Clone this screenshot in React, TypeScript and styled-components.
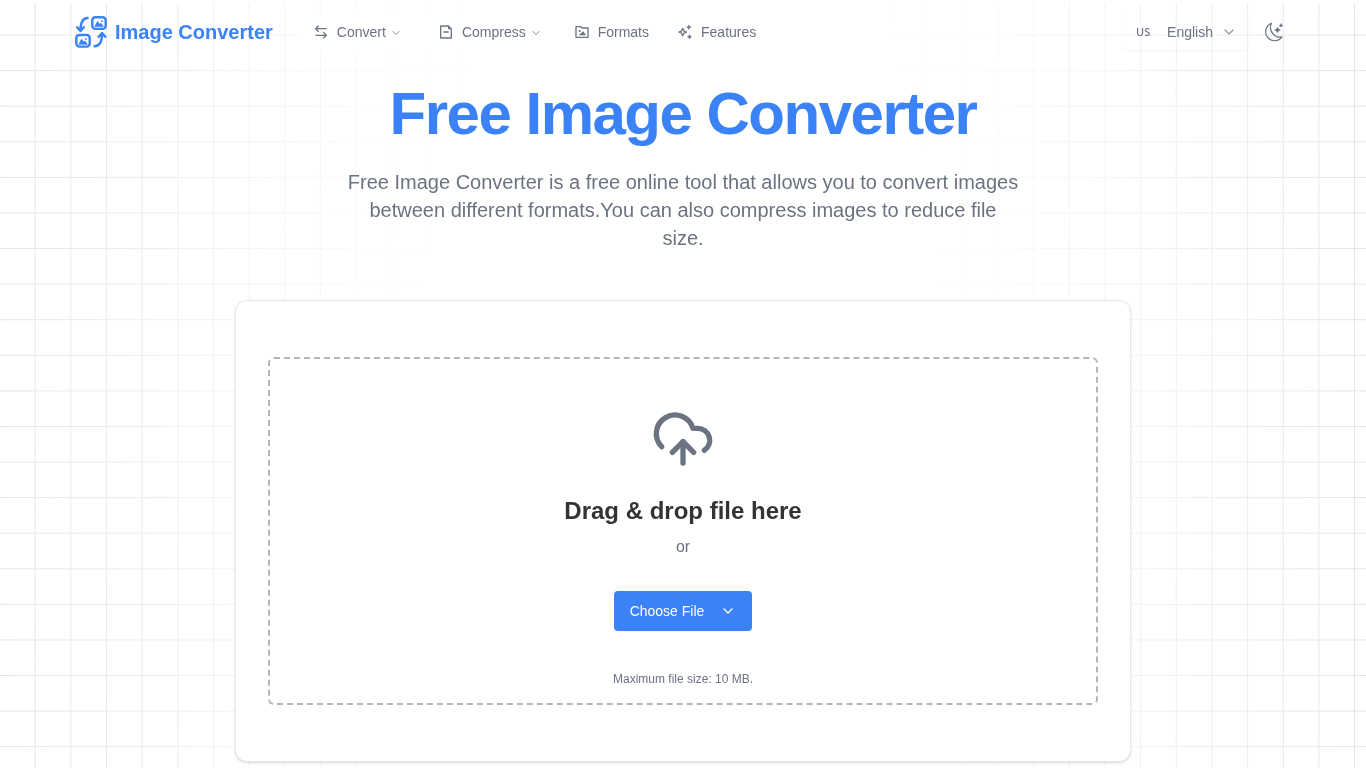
import React from 'react';
import styled, { createGlobalStyle } from 'styled-components';
import { LuCloudUpload } from 'react-icons/lu';
import { RiFileReduceLine, RiFolderImageLine } from 'react-icons/ri';
import { ChevronDown } from 'lucide-react';

const GlobalStyle = createGlobalStyle`
  *, *::before, *::after { box-sizing: border-box; }
  html { height: 100%; overflow: hidden; }
  body {
    margin: 0;
    min-height: 100%;
    background: #fff;
    color: #6b7280;
    font-family: "Liberation Sans", Arial, sans-serif;
    font-size: 14px;
    line-height: 20px;
  }
  a { color: inherit; text-decoration: none; }
  button { font: inherit; color: inherit; border: 0; background: none; cursor: pointer; }
  h1, h2, p, ul { margin: 0; padding: 0; }
`;

const Backdrop = styled.svg`
  position: fixed;
  inset: 0;
  z-index: -1;
  width: 100%;
  height: 100%;
  border-top: 3px solid #fff;
  mask-image: radial-gradient(ellipse 54% 200% at 50% 50%, transparent 35%, #000 100%);
`;

const Header = styled.header`
  display: flex;
  align-items: center;
  height: 64px;
  width: 100%;
  max-width: 1280px;
  margin: 0 auto;
  padding: 0 32px;
`;

const Brand = styled.a`
  display: flex;
  align-items: center;
  gap: 8px;
  color: #3b82f6;
  font-size: 20px;
  font-weight: 700;
  line-height: 28px;
  white-space: nowrap;
`;

const Nav = styled.nav`
  margin-left: 24px;
`;

const NavList = styled.ul`
  display: flex;
  list-style: none;
  background: #fff;
`;

const navItem = `
  display: flex;
  align-items: center;
  height: 40px;
  gap: 8px;
`;

const NavButton = styled.button`
  ${navItem}
  padding: 0 20px 0 16px;
`;

const NavLink = styled.a`
  ${navItem}
  padding: 0 16px 0 12px;
`;

const NavLabel = styled.span`
  display: flex;
  align-items: center;
  gap: 4px;
`;

const NavChevron = styled(ChevronDown)`
  margin-top: 2px;
  opacity: 0.8;
`;

const Actions = styled.div`
  display: flex;
  align-items: center;
  gap: 15px;
  margin-left: auto;
  padding-right: 7px;
`;

const LanguageButton = styled.button`
  display: flex;
  align-items: center;
  height: 36px;
  padding: 0 12px 0 14px;
  border-radius: 6px;
  box-shadow: 0 1px 2px rgba(0, 0, 0, 0.05);
`;

const Country = styled.span`
  width: 31px;
  text-align: left;
  font-family: "Noto Sans", sans-serif;
  font-size: 11px;
  font-weight: 500;
`;

const Language = styled.span`
  margin-right: 8px;
`;

const LanguageChevron = styled(ChevronDown)`
  opacity: 0.7;
`;

const ThemeButton = styled.button`
  display: flex;
  padding: 0;
`;

const Main = styled.main`
  display: flex;
  flex-direction: column;
  align-items: center;
  padding: 16px 32px 0;
`;

const Title = styled.h1`
  color: #3b82f6;
  font-size: 60px;
  line-height: 68px;
  font-weight: 700;
  letter-spacing: -0.025em;
  text-align: center;
`;

const Lead = styled.p`
  max-width: 672px;
  margin-top: 20px;
  font-size: 20px;
  line-height: 28px;
  text-align: center;
`;

const Card = styled.section`
  width: 100%;
  max-width: 896px;
  margin-top: 48px;
  padding: 56px 32px;
  background: #fff;
  border: 1px solid #e5e7eb;
  border-radius: 12px;
  box-shadow: 0 1px 3px rgba(0, 0, 0, 0.1), 0 1px 2px rgba(0, 0, 0, 0.06);
`;

const DropZone = styled.div`
  display: flex;
  flex-direction: column;
  align-items: center;
  padding: 48px 16px 16px;
  border: 2px dashed #b1b5bd;
  border-radius: 6px;
`;

const DropTitle = styled.h2`
  margin-top: 24px;
  color: #333;
  font-size: 24px;
  line-height: 32px;
  font-weight: 700;
`;

const Or = styled.p`
  margin-top: 8px;
  font-size: 16px;
  line-height: 24px;
`;

const ChooseButton = styled.button`
  display: flex;
  align-items: center;
  gap: 16px;
  height: 40px;
  margin-top: 32px;
  padding: 0 16px;
  border-radius: 4px;
  background: #3b82f6;
  color: #fff;
`;

const Limit = styled.p`
  margin-top: 40px;
  font-size: 12px;
  line-height: 16px;
`;

const Logo = () => (
  <svg width="32" height="32" viewBox="0 0 32 32" fill="none" stroke="currentColor" strokeWidth="2.4" strokeLinecap="round" strokeLinejoin="round" aria-hidden="true">
    <rect x="17.300" y="1.300" width="13.400" height="11.600" rx="3" />
    <rect x="1.300" y="19" width="13.400" height="11.600" rx="3" />
    <path d="M12.600 2C8 2.300 5.500 5.500 5.500 14M2.200 11.200l3.300 3.800 3.300-3.800" />
    <path d="M19.500 30.200c5-.3 7.500-4 7.500-12M23.700 20.800l3.300-3.800 3.300 3.800" />
    <path d="M20 10.200l2.500-4.700 2.200 2.800 1.300-1 2 2.900zM4 28l2.500-4.700 2.200 2.800 1.300-1 2 2.900z" fill="currentColor" strokeWidth=".8" />
    <circle cx="27" cy="5.200" r=".9" fill="currentColor" stroke="none" />
    <circle cx="11" cy="23" r=".9" fill="currentColor" stroke="none" />
  </svg>
);

const SwapIcon = () => (
  <svg width="16" height="16" viewBox="0 0 24 24" fill="none" stroke="currentColor" strokeWidth="2" aria-hidden="true">
    <path d="M20.500 7H4.500M8.500 2.500L4 7l4.500 4.500M3.500 17h16M15.500 12.500L20 17l-4.500 4.500" />
  </svg>
);

const SparkleIcon = () => (
  <svg width="16" height="16" viewBox="0 0 24 24" fill="none" stroke="currentColor" strokeWidth="2" strokeLinejoin="round" aria-hidden="true">
    <path d="M8.500 6.500l1.700 3.900 3.900 1.700-3.900 1.700-1.700 3.900-1.700-3.900-3.900-1.700 3.900-1.700z" />
    <path d="M17.800 1.500l1 2.200 2.200 1-2.200 1-1 2.200-1-2.200-2.200-1 2.200-1zM18.800 16l1 2.200 2.200 1-2.200 1-1 2.200-1-2.200-2.200-1 2.200-1z" fill="currentColor" strokeWidth="1" />
  </svg>
);

const MoonIcon = () => (
  <svg width="20" height="20" viewBox="0 0 20 20" fill="none" stroke="currentColor" strokeWidth="1.2" strokeLinejoin="round" aria-hidden="true">
    <path d="M7.500 1.300A9 9 0 1 0 18 14.900 9.600 9.600 0 0 1 7.500 1.300z" />
    <path d="M13.500 5.200q.5 2.300 2.900 2.800-2.400.5-2.900 2.800-.5-2.300-2.900-2.800 2.400-.5 2.900-2.800zM17 1.500q.3 1.600 1.900 1.900-1.600.3-1.900 1.900-.3-1.600-1.900-1.900 1.600-.3 1.900-1.900z" fill="currentColor" strokeWidth=".5" />
  </svg>
);

export default function App() {
  return (
    <>
      <GlobalStyle />
      <Backdrop aria-hidden="true">
        <defs>
          <pattern id="grid" width="35.66" height="35.58" y="-3" patternUnits="userSpaceOnUse">
            <path d="M35.200 0V35.200H0" fill="none" stroke="#dfe1e4" />
          </pattern>
        </defs>
        <rect width="100%" height="100%" fill="url(#grid)" />
      </Backdrop>
      <Header>
        <Brand href="#"><Logo />Image Converter</Brand>
        <Nav>
          <NavList>
            <li><NavButton type="button"><SwapIcon /><NavLabel>Convert<NavChevron size={12} /></NavLabel></NavButton></li>
            <li><NavButton type="button"><RiFileReduceLine size={16} /><NavLabel>Compress<NavChevron size={12} /></NavLabel></NavButton></li>
            <li><NavLink href="#formats"><RiFolderImageLine size={16} />Formats</NavLink></li>
            <li><NavLink href="#features"><SparkleIcon />Features</NavLink></li>
          </NavList>
        </Nav>
        <Actions>
          <LanguageButton type="button">
            <Country>US</Country>
            <Language>English</Language>
            <LanguageChevron size={16} />
          </LanguageButton>
          <ThemeButton type="button" aria-label="Switch theme"><MoonIcon /></ThemeButton>
        </Actions>
      </Header>
      <Main>
        <Title>Free Image Converter</Title>
        <Lead>Free Image Converter is a free online tool that allows you to convert images between different formats.You can also compress images to reduce file size.</Lead>
        <Card>
          <DropZone>
            <LuCloudUpload size={64} aria-hidden="true" />
            <DropTitle>Drag &amp; drop file here</DropTitle>
            <Or>or</Or>
            <ChooseButton type="button">Choose File<ChevronDown size={16} /></ChooseButton>
            <Limit>Maximum file size: 10 MB.</Limit>
          </DropZone>
        </Card>
      </Main>
    </>
  );
}
